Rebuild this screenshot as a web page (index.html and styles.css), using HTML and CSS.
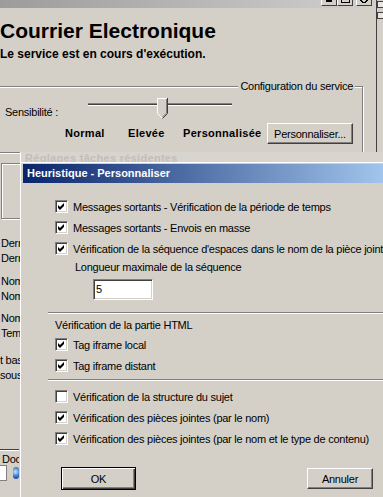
FILE: index.html
```html
<!DOCTYPE html>
<html lang="fr">
<head>
    <meta charset="UTF-8">
    <meta name="viewport" content="width=device-width, initial-scale=1.0">
    <title>Courrier Electronique</title>
    <link rel="stylesheet" href="styles.css">
</head>
<body>
    <div class="desktop">
        <div class="window">
            <div class="titlebar">
                <span class="cbtn"><i class="g-min"></i></span>
                <span class="cbtn"><i class="g-max"></i></span>
                <span class="cbtn cbtn-close"><svg width="8" height="4" viewBox="0 0 8 4"><path d="M0 0 L3 3 M1 0 L4 3 M7 0 L4 3 M8 0 L5 3" stroke="#000" stroke-width="1" fill="none"/></svg></span>
            </div>
            <div class="panel">
                <h1>Courrier Electronique</h1>
                <p class="status">Le service est en cours d'exécution.</p>

                <fieldset class="group">
                    <legend>Configuration du service</legend>
                    <div class="slider-row">
                        <span class="slider-label">Sensibilité :</span>
                        <div class="slider">
                            <div class="track"></div>
                            <svg class="thumb" width="11" height="21" viewBox="0 0 11 21">
                                <polygon points="0,0 10,0 10,15 5,20 0,15" fill="#d4d0c8"/>
                                <polyline points="0.5,15.5 0.5,0.5 10,0.5" fill="none" stroke="#fff"/>
                                <polyline points="0.5,15.5 5.5,20.5" fill="none" stroke="#fff"/>
                                <polyline points="10.5,0 10.5,15.5 5.5,20.5" fill="none" stroke="#404040"/>
                                <polyline points="9.5,1 9.5,15 5.5,19" fill="none" stroke="#808080"/>
                            </svg>
                        </div>
                    </div>
                    <div class="level-row">
                        <b class="lvl lvl-normal">Normal</b>
                        <b class="lvl lvl-high">Elevée</b>
                        <b class="lvl lvl-custom">Personnalisée</b>
                        <button class="btn btn-custom">Personnaliser...</button>
                    </div>
                </fieldset>

                <!-- partie cachée derrière la boîte de dialogue -->
                <div class="group2"></div>
                <div class="stats">
                    <div class="stat-block"><div>Dernière analyse :</div><div>Dernière mise à jour :</div></div>
                    <div class="stat-block"><div>Nombre de messages analysés :</div><div>Nombre de messages infectés :</div></div>
                    <div class="stat-block"><div>Nombre de spams détectés :</div><div>Temps moyen d'analyse :</div></div>
                    <div class="stat-block stat-note"><div>t basé sur l'analyse heuristique</div><div>sous réserve de mise à jour</div></div>
                </div>
                <div class="footer">
                    <div class="footer-label">Doc.:</div>
                    <div class="footer-row"><span class="footer-field"></span><span class="footer-icon"></span></div>
                </div>
            </div>
        </div>
        <div class="side">
            <span class="side-icon"></span>
            <span class="side-icon"></span>
        </div>
    </div>

    <div class="dialog">
        <div class="ghost">Réglages tâches résidentes</div>
        <div class="caption">Heuristique - Personnaliser</div>
        <div class="client">
            <div class="opts">
                <label class="check"><span class="box"><svg width="7" height="7" viewBox="0 0 7 7"><polygon points="0,2 2,4 6,0 6,3 2,7 0,5"/></svg></span>Messages sortants - Vérification de la période de temps</label>
                <label class="check"><span class="box"><svg width="7" height="7" viewBox="0 0 7 7"><polygon points="0,2 2,4 6,0 6,3 2,7 0,5"/></svg></span>Messages sortants - Envois en masse</label>
                <label class="check"><span class="box"><svg width="7" height="7" viewBox="0 0 7 7"><polygon points="0,2 2,4 6,0 6,3 2,7 0,5"/></svg></span>Vérification de la séquence d'espaces dans le nom de la pièce jointe</label>
                <div class="sub-label">Longueur maximale de la séquence</div>
                <div class="edit">5</div>
            </div>
            <div class="sep"></div>
            <div class="opts">
                <div class="section-title">Vérification de la partie HTML</div>
                <label class="check check-first"><span class="box"><svg width="7" height="7" viewBox="0 0 7 7"><polygon points="0,2 2,4 6,0 6,3 2,7 0,5"/></svg></span>Tag iframe local</label>
                <label class="check"><span class="box"><svg width="7" height="7" viewBox="0 0 7 7"><polygon points="0,2 2,4 6,0 6,3 2,7 0,5"/></svg></span>Tag iframe distant</label>
            </div>
            <div class="sep sep-2"></div>
            <div class="opts opts-last">
                <label class="check"><span class="box"></span>Vérification de la structure du sujet</label>
                <label class="check"><span class="box"><svg width="7" height="7" viewBox="0 0 7 7"><polygon points="0,2 2,4 6,0 6,3 2,7 0,5"/></svg></span>Vérification des pièces jointes (par le nom)</label>
                <label class="check"><span class="box"><svg width="7" height="7" viewBox="0 0 7 7"><polygon points="0,2 2,4 6,0 6,3 2,7 0,5"/></svg></span>Vérification des pièces jointes (par le nom et le type de contenu)</label>
            </div>
            <div class="btn-row">
                <button class="btn btn-default">OK</button>
                <button class="btn btn-cancel">Annuler</button>
            </div>
        </div>
    </div>
</body>
</html>
```

FILE: styles.css
```css
body {
    margin: 0;
    width: 383px;
    height: 497px;
    overflow: hidden;
    position: relative;
    background: #d4d0c8;
    color: #000;
    font-family: "Liberation Sans", Arial, sans-serif;
    font-size: 11px;
    letter-spacing: -0.25px;
}

.desktop { display: flex; height: 100%; }
.window { width: 376px; flex: none; }

/* barre de titre (fenêtre inactive, coupée en haut) */
.titlebar {
    height: 8px;
    background: linear-gradient(90deg, #9c9c9c, #d0d0d0);
    display: flex;
    justify-content: flex-end;
    align-items: flex-start;
    padding-right: 4px;
}
.cbtn {
    width: 14px;
    height: 5px;
    background: #d4d0c8;
    border-left: 1px solid #fff;
    border-right: 1px solid #404040;
    border-bottom: 1px solid #404040;
    display: flex;
    justify-content: center;
    align-items: flex-start;
}
.cbtn-close { margin-left: 3px; }
.g-min { width: 6px; height: 2px; background: #000; }
.g-max { width: 7px; height: 2px; border: 1px solid #000; border-top: none; }

.panel { overflow: hidden; }

h1 {
    margin: 11px 0 0;
    font-size: 21px;
    line-height: 24px;
    letter-spacing: 0;
}
.status {
    margin: 4px 0 0;
    font-size: 12px;
    line-height: 14px;
    font-weight: bold;
    letter-spacing: 0;
}

/* groupe Configuration du service */
.group {
    margin: 19px 13px 0 -10px;
    padding: 5px 0 8px 14px;
    border: 1px solid #808080;
    box-shadow: inset 1px 1px #fff, 1px 1px #fff;
    min-width: 0;
}
.group legend {
    margin-left: auto;
    margin-right: 7px;
    padding: 0 2px;
    line-height: 13px;
    background: #d4d0c8;
}
.slider-row { display: flex; align-items: flex-start; height: 21px; }
.slider-label { width: 83px; margin-top: 8px; line-height: 13px; }
.slider { position: relative; width: 144px; height: 21px; }
.track {
    margin-top: 5px;
    height: 1px;
    background: #404040;
    border-top: 1px solid #808080;
    border-bottom: 1px solid #fff;
}
.thumb { position: absolute; left: 69px; top: 0; }

.level-row { display: flex; align-items: center; margin-top: 4px; padding-left: 60px; }
.lvl { font-weight: bold; letter-spacing: 0.3px; line-height: 13px; }
.lvl-normal { width: 63px; }
.lvl-high { width: 55px; }
.lvl-custom { width: 84px; }

.btn {
    font-family: inherit;
    font-size: 11px;
    letter-spacing: -0.25px;
    color: #000;
    background: #d4d0c8;
    border: 1px solid;
    border-color: #fff #404040 #404040 #fff;
    box-shadow: inset -1px -1px #808080;
    padding: 0;
    box-sizing: border-box;
}
.btn-custom { width: 86px; height: 21px; }

/* contenu de la fenêtre de fond, visible seulement à gauche de la boîte */
.group2 {
    margin: 10px 13px 0 1px;
    height: 54px;
    border: 1px solid #808080;
    box-shadow: inset 1px 1px #fff, 1px 1px #fff;
}
.stats { margin-top: 17px; width: 20px; overflow: hidden; }
.stat-block { line-height: 15px; white-space: nowrap; padding-left: 1px; }
.stat-block + .stat-block { margin-top: 8px; }
.stat-block:nth-child(3) { margin-top: 7px; }
.stat-block.stat-note { margin-top: 12px; padding-left: 0; }
.footer {
    margin-top: 66px;
    width: 19px;
    overflow: hidden;
    white-space: nowrap;
    border-top: 1px solid #404040;
    box-shadow: 0 1px #fff inset;
    padding-top: 4px;
}
.footer-label { line-height: 10px; margin-left: 2px; }
.footer-row { display: flex; align-items: center; gap: 6px; margin-top: 1px; }
.footer-field { width: 6px; height: 14px; background: #fff; border: 1px solid #808080; border-left: none; }
.footer-icon {
    width: 6px;
    height: 12px;
    border-radius: 3px;
    background: radial-gradient(circle at 40% 40%, #cfe4ff, #2f6fc9 60%, #1c3f7a);
}

.side {
    flex: 1;
    border-left: 1px solid #404040;
    display: flex;
    flex-direction: column;
    align-items: flex-end;
    gap: 4px;
    padding-top: 1px;
}
.side-icon { width: 5px; height: 5px; border: 1px solid #404040; border-right: none; background: #e8e6e2; }

/* boîte de dialogue Heuristique */
.dialog {
    position: absolute;
    left: 20px;
    top: 152px;
    width: 372px;
    height: 345px;
    background: #d4d0c8;
    border-left: 1px solid #fff;
    padding-left: 2px;
    z-index: 2;
}
.ghost {
    height: 10px;
    overflow: hidden;
    margin-left: -2px;
    padding-left: 4px;
    border-bottom: 1px solid #fff;
    background: #d8d5cf;
    color: #c2beb7;
    font-weight: bold;
    line-height: 12px;
    letter-spacing: 0.3px;
    white-space: nowrap;
}
.caption {
    margin-top: 1px;
    height: 19px;
    line-height: 19px;
    padding-left: 4px;
    background: linear-gradient(90deg, #0a246a, #a6caf0);
    color: #fff;
    font-weight: bold;
    letter-spacing: 0;
    white-space: nowrap;
}
.client { padding-top: 13px; }

.opts { padding-left: 32px; }
.check {
    display: flex;
    align-items: center;
    gap: 5px;
    height: 21px;
    white-space: nowrap;
}
.box {
    flex: none;
    width: 13px;
    height: 13px;
    box-sizing: border-box;
    border: 1px solid;
    border-color: #808080 #fff #fff #808080;
    box-shadow: inset 1px 1px #404040, inset -1px -1px #d4d0c8;
    background: #fff;
    display: flex;
    align-items: center;
    justify-content: center;
}
.sub-label { margin: 2px 0 0 20px; line-height: 13px; }
.edit {
    margin: 5px 0 0 38px;
    width: 60px;
    height: 21px;
    box-sizing: border-box;
    border: 1px solid;
    border-color: #808080 #fff #fff #808080;
    box-shadow: inset 1px 1px #404040, inset -1px -1px #d4d0c8;
    background: #fff;
    padding-left: 2px;
    line-height: 19px;
}

.sep {
    margin: 12px 0 0 25px;
    border-top: 1px solid #808080;
    border-bottom: 1px solid #fff;
}
.sep-2 { margin-top: 3px; }
.section-title { margin-top: 5px; line-height: 13px; }
.check-first { margin-top: 2px; }
.opts-last { margin-top: 5px; }

.btn-row {
    margin: 18px 0 0 38px;
    width: 312px;
    display: flex;
    justify-content: space-between;
    align-items: center;
}
.btn-default {
    width: 75px;
    height: 23px;
    border: 1px solid #000;
    box-shadow: inset 1px 1px #fff, inset -1px -1px #404040, inset -2px -2px #808080;
}
.btn-cancel { width: 66px; height: 21px; }
```
